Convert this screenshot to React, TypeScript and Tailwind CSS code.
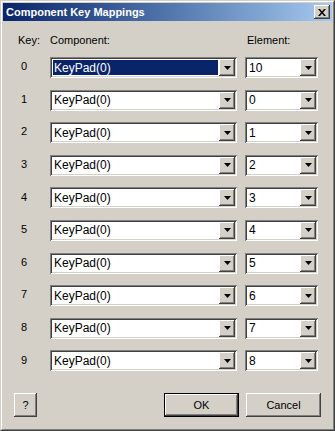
import React from 'react';

const sunken =
  'shadow-[inset_1px_1px_0_#808080,inset_-1px_-1px_0_#ffffff,inset_2px_2px_0_#404040,inset_-2px_-2px_0_#d4d0c8]';
const raised =
  'shadow-[inset_-1px_-1px_0_#404040,inset_1px_1px_0_#ffffff,inset_-2px_-2px_0_#808080,inset_2px_2px_0_#d4d0c8]';

function DropButton() {
  return (
    <div className={`w-[16px] h-[17px] bg-[#d4d0c8] flex items-center justify-center ${raised}`}>
      <svg width="7" height="4" viewBox="0 0 7 4">
        <path d="M0 0h7L3.5 4z" fill="#000" />
      </svg>
    </div>
  );
}

function Combo({ value, width, selected }: { value: string; width: string; selected?: boolean }) {
  return (
    <div className={`${width} h-[21px] bg-white flex items-center p-[2px] ${sunken}`}>
      <div className="flex-1 h-full p-[1px] flex">
        <div
          className={`flex-1 flex items-center pl-[1px] text-[12px] leading-none ${
            selected ? 'bg-[#0a246a] text-white' : 'text-black'
          }`}
        >
          {value}
        </div>
      </div>
      <DropButton />
    </div>
  );
}

function Button({ label, width, isDefault }: { label: string; width: string; isDefault?: boolean }) {
  return (
    <div className={`${width} h-[24px] ${isDefault ? 'border border-black' : ''}`}>
      <div className={`w-full h-full bg-[#d4d0c8] flex items-center justify-center text-[11px] text-black ${raised}`}>
        {label}
      </div>
    </div>
  );
}

export default function App() {
  const rows = Array.from({ length: 10 }, (_, i) => ({
    key: i,
    element: i === 0 ? '10' : String(i - 1),
  }));

  return (
    <div
      className="w-[335px] h-[431px] bg-[#d4d0c8] flex flex-col border border-t-[#d4d0c8] border-l-[#d4d0c8] border-r-[#404040] border-b-[#404040]"
      style={{ fontFamily: '"Liberation Sans", Arial, sans-serif' }}
    >
      <div className="flex-1 flex flex-col border border-t-white border-l-white border-r-[#808080] border-b-[#808080] p-[1px]">
        {/* Title bar */}
        <div className="h-[18px] bg-gradient-to-r from-[#0a246a] to-[#a6caf0] flex items-center justify-between pl-[3px] pr-[2px]">
          <span className="text-white font-bold text-[11px]">Component Key Mappings</span>
          <div className={`w-[16px] h-[14px] bg-[#d4d0c8] flex items-center justify-center ${raised}`}>
            <svg width="8" height="7" viewBox="0 0 8 7">
              <path d="M0 0h2l2 2.5L6 0h2L5 3.5 8 7H6L4 4.5 2 7H0l3-3.5z" fill="#000" />
            </svg>
          </div>
        </div>

        {/* Header */}
        <div className="flex items-center text-[11px] text-black mt-[13px] h-[12px]">
          <span className="ml-[15px] w-[32px]">Key:</span>
          <span className="w-[197px]">Component:</span>
          <span>Element:</span>
        </div>

        {/* Rows */}
        <div className="flex flex-col gap-[11.6px] mt-[11px]">
          {rows.map((r) => (
            <div key={r.key} className="flex items-center h-[21px]">
              <span className="w-[47px] pl-[18px] text-[11px] text-black -mt-[2px]">{r.key}</span>
              <Combo value="KeyPad(0)" width="w-[187px]" selected={r.key === 0} />
              <div className="w-[8px]" />
              <Combo value={r.element} width="w-[73px]" />
            </div>
          ))}
        </div>

        <div className="flex-1" />

        {/* Buttons */}
        <div className="flex items-center mb-[11px]">
          <div className="ml-[11px]">
            <Button label="?" width="w-[23px]" />
          </div>
          <div className="flex-1" />
          <Button label="OK" width="w-[75px]" isDefault />
          <div className="w-[7px]" />
          <Button label="Cancel" width="w-[75px]" />
          <div className="w-[11px]" />
        </div>
      </div>
    </div>
  );
}
